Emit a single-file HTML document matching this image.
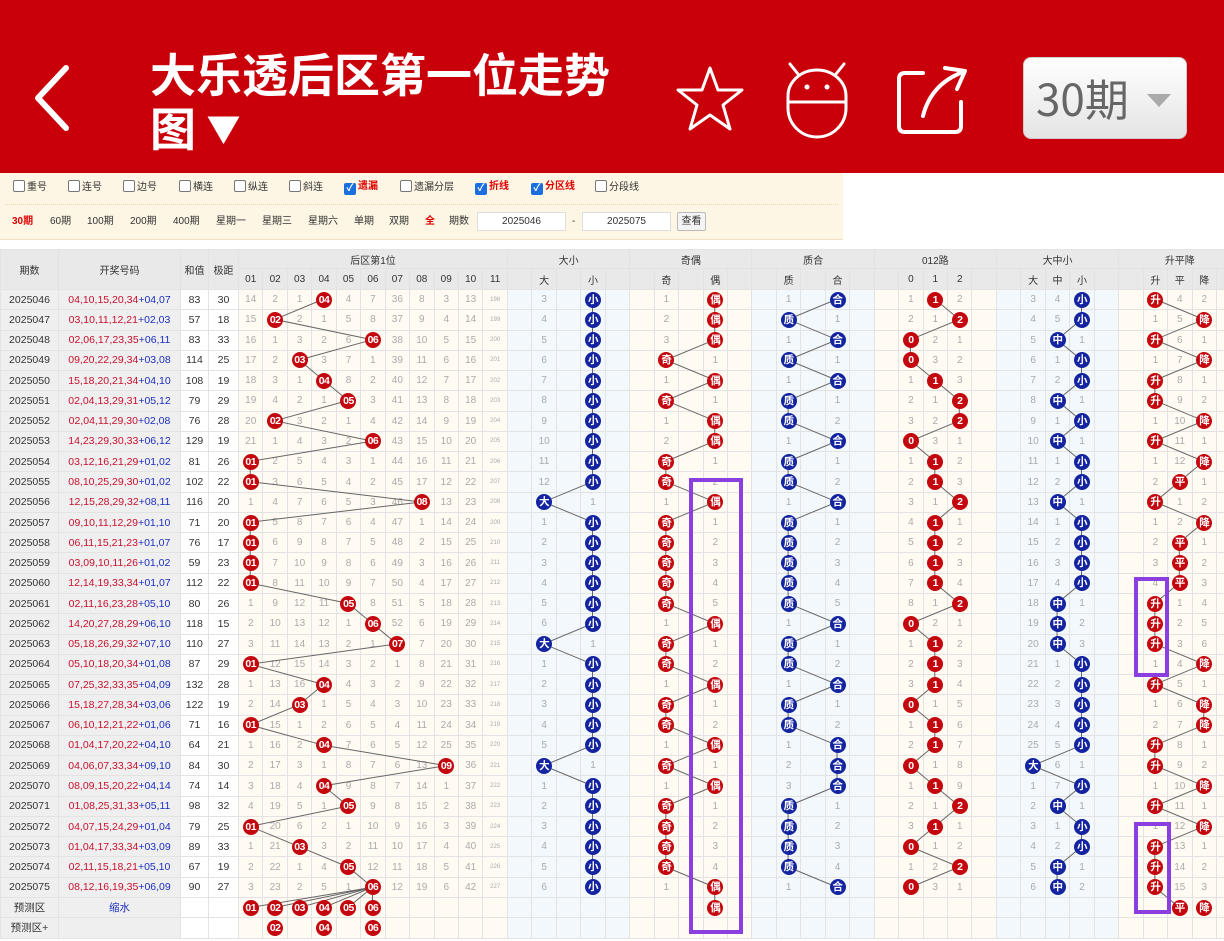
<!DOCTYPE html>
<html><head><meta charset="utf-8">
<style>
*{margin:0;padding:0;box-sizing:border-box}
body{width:1224px;height:941px;overflow:hidden;background:#fff;font-family:"Liberation Sans","Noto Sans CJK SC",sans-serif;position:relative}
.top{position:absolute;left:0;top:0;width:1224px;height:173px;background:#c9000a}
.title{position:absolute;left:150px;top:46px;color:#fff;font-size:46px;font-weight:bold;line-height:54px;font-family:"Noto Sans CJK SC",sans-serif}
.title small{font-size:34px;vertical-align:4px}
.dd{position:absolute;left:1023px;top:57px;width:164px;height:82px;border-radius:8px;background:linear-gradient(#fff,#e4e4e4);border:1px solid #ccc}
.dd span{position:absolute;left:12px;top:14px;font-size:44px;color:#666;font-family:"Noto Sans CJK SC",sans-serif;line-height:50px}
.dd i{position:absolute;left:123px;top:36px;border-left:12px solid transparent;border-right:12px solid transparent;border-top:13px solid #aaa}
.flt{position:absolute;left:0;top:173px;width:843px;height:67px;background:#fdf6e4;border-bottom:1px solid #f0e2c0;font-size:10px;color:#333}
.flt .l{position:absolute;top:7px;line-height:14px;white-space:nowrap}
.cb{display:inline-block;width:12px;height:12px;border:1px solid #777;border-radius:2px;background:#fff;vertical-align:-2px;margin-right:2px}
.cb.on{background:#1a6fe0;border-color:#1a6fe0;color:#fff;font-size:10px;line-height:10px;text-align:center;font-weight:bold}
.red{color:#d00;font-weight:bold}
.sep{position:absolute;left:5px;right:5px;top:31px;border-top:1px dotted #e8d8b0}
.flt .m{position:absolute;top:42px;line-height:14px;white-space:nowrap}
.inp{position:absolute;top:39px;height:19px;width:89px;background:#fff;border:1px solid #ddd;text-align:center;line-height:17px}
.btn{position:absolute;left:677px;top:39px;width:29px;height:19px;border:1px solid #bbb;background:#f4f4f4;text-align:center;line-height:17px;border-radius:2px}
table{position:absolute;left:0;top:249px;border-collapse:collapse;table-layout:fixed;width:1240.45px;font-size:10px;color:#aaa}
td,th{padding:0;text-align:center;border:1px solid #e3e3e3;white-space:nowrap;overflow:visible;font-weight:normal}
thead th{background:#e9e9e9;color:#333;font-size:10px}
thead tr.h1{height:19px}thead tr.h2{height:21px}
tbody tr{height:20.28px}
tbody td:nth-child(1){background:#efefef;color:#333;font-size:10.5px}
tbody td:nth-child(2){background:#efefef;color:#c8102e;font-size:10.5px}
tbody td:nth-child(3),tbody td:nth-child(4){background:#fff;color:#333;font-size:10.5px}
em{font-style:normal;color:#1c2fc0}
.cr{background:#fffbf2}.cbl{background:#f3f8fd}
.sl{border-left:1px solid #c59a9a}
td.s{font-size:6px}
b,u{display:inline-block;position:relative;z-index:2;width:16px;height:16px;border-radius:50%;color:#fff;font-size:10.5px;line-height:16px;font-weight:bold;text-decoration:none;vertical-align:middle;letter-spacing:-0.5px}
b{background:#c4070f}u{background:#1424a0}
svg.ln{position:absolute;left:238px;top:289px;width:1002.45px;height:628.7px;z-index:1}
.pb{position:absolute;border:4px solid #8b3fe0;z-index:3}
</style></head><body>
<div class="top">
<svg style="position:absolute;left:30px;top:62px" width="44" height="72" viewBox="0 0 44 72"><path d="M36 6 L8 36 L36 66" fill="none" stroke="#fff" stroke-width="6" stroke-linecap="round" stroke-linejoin="round"/></svg>
<div class="title">大乐透后区第一位走势<br>图 <small>▼</small></div>
<svg style="position:absolute;left:674px;top:64px" width="72" height="70" viewBox="0 0 72 70"><path d="M36 4 L44 26 L68 26 L49 41 L56 65 L36 51 L16 65 L23 41 L4 26 L28 26 Z" fill="none" stroke="#fff" stroke-width="3" stroke-linejoin="round"/></svg>
<svg style="position:absolute;left:780px;top:58px" width="74" height="82" viewBox="0 0 74 82"><path d="M10 6 L18 16 M64 6 L56 16" stroke="#fff" stroke-width="3" stroke-linecap="round"/><path d="M8 44 L8 38 A29 26 0 0 1 66 38 L66 50 A29 29 0 0 1 8 50 Z M8 44 L66 44" fill="none" stroke="#fff" stroke-width="3"/><circle cx="27" cy="29" r="2.5" fill="#fff"/><circle cx="47" cy="29" r="2.5" fill="#fff"/></svg>
<svg style="position:absolute;left:893px;top:62px" width="76" height="76" viewBox="0 0 76 76"><path d="M30 11 L12 11 Q6 11 6 17 L6 64 Q6 70 12 70 L62 70 Q68 70 68 64 L68 40" fill="none" stroke="#fff" stroke-width="4" stroke-linecap="round"/><path d="M30 54 Q38 22 70 10 M52 6 L72 9 L64 27" fill="none" stroke="#fff" stroke-width="4" stroke-linecap="round" stroke-linejoin="round"/></svg>
<div class="dd"><span>30期</span><i></i></div>
</div>
<div class="flt">
<div class="l" style="left:13px"><span class="cb"></span>重号</div>
<div class="l" style="left:68px"><span class="cb"></span>连号</div>
<div class="l" style="left:123px"><span class="cb"></span>边号</div>
<div class="l" style="left:179px"><span class="cb"></span>横连</div>
<div class="l" style="left:234px"><span class="cb"></span>纵连</div>
<div class="l" style="left:289px"><span class="cb"></span>斜连</div>
<div class="l red" style="left:344px"><span class="cb on">✓</span>遗漏</div>
<div class="l" style="left:400px"><span class="cb"></span>遗漏分层</div>
<div class="l red" style="left:475px"><span class="cb on">✓</span>折线</div>
<div class="l red" style="left:531px"><span class="cb on">✓</span>分区线</div>
<div class="l" style="left:595px"><span class="cb"></span>分段线</div>
<div class="sep"></div>
<div class="m red" style="left:12px">30期</div><div class="m" style="left:50px">60期</div><div class="m" style="left:87px">100期</div><div class="m" style="left:130px">200期</div><div class="m" style="left:173px">400期</div><div class="m" style="left:216px">星期一</div><div class="m" style="left:262px">星期三</div><div class="m" style="left:308px">星期六</div><div class="m" style="left:354px">单期</div><div class="m" style="left:389px">双期</div><div class="m red" style="left:425px">全</div><div class="m" style="left:449px">期数</div>
<div class="inp" style="left:477px">2025046</div><div class="m" style="left:572px">-</div><div class="inp" style="left:582px">2025075</div><div class="btn">查看</div>
</div>
<svg class="ln" viewBox="0 0 41 31" preserveAspectRatio="none"><g fill="none" stroke="#666" stroke-width="1" vector-effect="non-scaling-stroke">
<polyline vector-effect="non-scaling-stroke" points="3.5,.5 1.5,1.5 5.5,2.5 2.5,3.5 3.5,4.5 4.5,5.5 1.5,6.5 5.5,7.5 .5,8.5 .5,9.5 7.5,10.5 .5,11.5 .5,12.5 .5,13.5 .5,14.5 4.5,15.5 5.5,16.5 6.5,17.5 .5,18.5 3.5,19.5 2.5,20.5 .5,21.5 3.5,22.5 8.5,23.5 3.5,24.5 4.5,25.5 .5,26.5 2.5,27.5 4.5,28.5 5.5,29.5"/>
<path vector-effect="non-scaling-stroke" d="M5.5 29.5 L.5 30.5 M5.5 29.5 L1.5 30.5 M5.5 29.5 L2.5 30.5 M5.5 29.5 L3.5 30.5 M5.5 29.5 L4.5 30.5 M5.5 29.5 L5.5 30.5"/>
<polyline vector-effect="non-scaling-stroke" points="14.5,.5 14.5,1.5 14.5,2.5 14.5,3.5 14.5,4.5 14.5,5.5 14.5,6.5 14.5,7.5 14.5,8.5 14.5,9.5 12.5,10.5 14.5,11.5 14.5,12.5 14.5,13.5 14.5,14.5 14.5,15.5 14.5,16.5 12.5,17.5 14.5,18.5 14.5,19.5 14.5,20.5 14.5,21.5 14.5,22.5 12.5,23.5 14.5,24.5 14.5,25.5 14.5,26.5 14.5,27.5 14.5,28.5 14.5,29.5"/>
<polyline vector-effect="non-scaling-stroke" points="19.5,.5 19.5,1.5 19.5,2.5 17.5,3.5 19.5,4.5 17.5,5.5 19.5,6.5 19.5,7.5 17.5,8.5 17.5,9.5 19.5,10.5 17.5,11.5 17.5,12.5 17.5,13.5 17.5,14.5 17.5,15.5 19.5,16.5 17.5,17.5 17.5,18.5 19.5,19.5 17.5,20.5 17.5,21.5 19.5,22.5 17.5,23.5 19.5,24.5 17.5,25.5 17.5,26.5 17.5,27.5 17.5,28.5 19.5,29.5 19.5,30.5"/>
<polyline vector-effect="non-scaling-stroke" points="24.5,.5 22.5,1.5 24.5,2.5 22.5,3.5 24.5,4.5 22.5,5.5 22.5,6.5 24.5,7.5 22.5,8.5 22.5,9.5 24.5,10.5 22.5,11.5 22.5,12.5 22.5,13.5 22.5,14.5 22.5,15.5 24.5,16.5 22.5,17.5 22.5,18.5 24.5,19.5 22.5,20.5 22.5,21.5 24.5,22.5 24.5,23.5 24.5,24.5 22.5,25.5 22.5,26.5 22.5,27.5 22.5,28.5 24.5,29.5"/>
<polyline vector-effect="non-scaling-stroke" points="28.5,.5 29.5,1.5 27.5,2.5 27.5,3.5 28.5,4.5 29.5,5.5 29.5,6.5 27.5,7.5 28.5,8.5 28.5,9.5 29.5,10.5 28.5,11.5 28.5,12.5 28.5,13.5 28.5,14.5 29.5,15.5 27.5,16.5 28.5,17.5 28.5,18.5 28.5,19.5 27.5,20.5 28.5,21.5 28.5,22.5 27.5,23.5 28.5,24.5 29.5,25.5 28.5,26.5 27.5,27.5 29.5,28.5 27.5,29.5"/>
<polyline vector-effect="non-scaling-stroke" points="34.5,.5 34.5,1.5 33.5,2.5 34.5,3.5 34.5,4.5 33.5,5.5 34.5,6.5 33.5,7.5 34.5,8.5 34.5,9.5 33.5,10.5 34.5,11.5 34.5,12.5 34.5,13.5 34.5,14.5 33.5,15.5 33.5,16.5 33.5,17.5 34.5,18.5 34.5,19.5 34.5,20.5 34.5,21.5 34.5,22.5 32.5,23.5 34.5,24.5 33.5,25.5 34.5,26.5 34.5,27.5 33.5,28.5 33.5,29.5"/>
<polyline vector-effect="non-scaling-stroke" points="37.5,.5 39.5,1.5 37.5,2.5 39.5,3.5 37.5,4.5 37.5,5.5 39.5,6.5 37.5,7.5 39.5,8.5 38.5,9.5 37.5,10.5 39.5,11.5 38.5,12.5 38.5,13.5 38.5,14.5 37.5,15.5 37.5,16.5 37.5,17.5 39.5,18.5 37.5,19.5 39.5,20.5 39.5,21.5 37.5,22.5 37.5,23.5 39.5,24.5 37.5,25.5 39.5,26.5 37.5,27.5 37.5,28.5 37.5,29.5 38.5,30.5"/>
</g></svg>
<table>
<colgroup><col style="width:58px"><col style="width:122px"><col style="width:28px"><col style="width:30px">
<col class="cr sl" span="11" style="width:24.45px">
<col class="cbl sl" style="width:24.45px"><col class="cbl" span="4" style="width:24.45px">
<col class="cr sl" style="width:24.45px"><col class="cr" span="4" style="width:24.45px">
<col class="cbl sl" style="width:24.45px"><col class="cbl" span="4" style="width:24.45px">
<col class="cr sl" style="width:24.45px"><col class="cr" span="4" style="width:24.45px">
<col class="cbl sl" style="width:24.45px"><col class="cbl" span="4" style="width:24.45px">
<col class="cr sl" style="width:24.45px"><col class="cr" span="4" style="width:24.45px">
</colgroup>
<thead>
<tr class="h1"><th rowspan="2">期数</th><th rowspan="2">开奖号码</th><th rowspan="2">和值</th><th rowspan="2">极距</th><th colspan="11">后区第1位</th><th colspan="5">大小</th><th colspan="5">奇偶</th><th colspan="5">质合</th><th colspan="5">012路</th><th colspan="5">大中小</th><th colspan="5">升平降</th></tr>
<tr class="h2"><th>01</th><th>02</th><th>03</th><th>04</th><th>05</th><th>06</th><th>07</th><th>08</th><th>09</th><th>10</th><th>11</th><th></th><th>大</th><th></th><th>小</th><th></th><th></th><th>奇</th><th></th><th>偶</th><th></th><th></th><th>质</th><th></th><th>合</th><th></th><th></th><th>0</th><th>1</th><th>2</th><th></th><th></th><th>大</th><th>中</th><th>小</th><th></th><th></th><th>升</th><th>平</th><th>降</th><th></th></tr>
</thead>
<tbody>
<tr><td>2025046<td>04,10,15,20,34<em>+04,07</em><td>83<td>30<td>14<td>2<td>1<td><b>04</b><td>4<td>7<td>36<td>8<td>3<td>13<td class=s>198<td><td>3<td><td><u>小</u><td><td><td>1<td><td><b>偶</b><td><td><td>1<td><td><u>合</u><td><td><td>1<td><b>1</b><td>2<td><td><td>3<td>4<td><u>小</u><td><td><td><b>升</b><td>4<td>2<td></tr>
<tr><td>2025047<td>03,10,11,12,21<em>+02,03</em><td>57<td>18<td>15<td><b>02</b><td>2<td>1<td>5<td>8<td>37<td>9<td>4<td>14<td class=s>199<td><td>4<td><td><u>小</u><td><td><td>2<td><td><b>偶</b><td><td><td><u>质</u><td><td>1<td><td><td>2<td>1<td><b>2</b><td><td><td>4<td>5<td><u>小</u><td><td><td>1<td>5<td><b>降</b><td></tr>
<tr><td>2025048<td>02,06,17,23,35<em>+06,11</em><td>83<td>33<td>16<td>1<td>3<td>2<td>6<td><b>06</b><td>38<td>10<td>5<td>15<td class=s>200<td><td>5<td><td><u>小</u><td><td><td>3<td><td><b>偶</b><td><td><td>1<td><td><u>合</u><td><td><td><b>0</b><td>2<td>1<td><td><td>5<td><u>中</u><td>1<td><td><td><b>升</b><td>6<td>1<td></tr>
<tr><td>2025049<td>09,20,22,29,34<em>+03,08</em><td>114<td>25<td>17<td>2<td><b>03</b><td>3<td>7<td>1<td>39<td>11<td>6<td>16<td class=s>201<td><td>6<td><td><u>小</u><td><td><td><b>奇</b><td><td>1<td><td><td><u>质</u><td><td>1<td><td><td><b>0</b><td>3<td>2<td><td><td>6<td>1<td><u>小</u><td><td><td>1<td>7<td><b>降</b><td></tr>
<tr><td>2025050<td>15,18,20,21,34<em>+04,10</em><td>108<td>19<td>18<td>3<td>1<td><b>04</b><td>8<td>2<td>40<td>12<td>7<td>17<td class=s>202<td><td>7<td><td><u>小</u><td><td><td>1<td><td><b>偶</b><td><td><td>1<td><td><u>合</u><td><td><td>1<td><b>1</b><td>3<td><td><td>7<td>2<td><u>小</u><td><td><td><b>升</b><td>8<td>1<td></tr>
<tr><td>2025051<td>02,04,13,29,31<em>+05,12</em><td>79<td>29<td>19<td>4<td>2<td>1<td><b>05</b><td>3<td>41<td>13<td>8<td>18<td class=s>203<td><td>8<td><td><u>小</u><td><td><td><b>奇</b><td><td>1<td><td><td><u>质</u><td><td>1<td><td><td>2<td>1<td><b>2</b><td><td><td>8<td><u>中</u><td>1<td><td><td><b>升</b><td>9<td>2<td></tr>
<tr><td>2025052<td>02,04,11,29,30<em>+02,08</em><td>76<td>28<td>20<td><b>02</b><td>3<td>2<td>1<td>4<td>42<td>14<td>9<td>19<td class=s>204<td><td>9<td><td><u>小</u><td><td><td>1<td><td><b>偶</b><td><td><td><u>质</u><td><td>2<td><td><td>3<td>2<td><b>2</b><td><td><td>9<td>1<td><u>小</u><td><td><td>1<td>10<td><b>降</b><td></tr>
<tr><td>2025053<td>14,23,29,30,33<em>+06,12</em><td>129<td>19<td>21<td>1<td>4<td>3<td>2<td><b>06</b><td>43<td>15<td>10<td>20<td class=s>205<td><td>10<td><td><u>小</u><td><td><td>2<td><td><b>偶</b><td><td><td>1<td><td><u>合</u><td><td><td><b>0</b><td>3<td>1<td><td><td>10<td><u>中</u><td>1<td><td><td><b>升</b><td>11<td>1<td></tr>
<tr><td>2025054<td>03,12,16,21,29<em>+01,02</em><td>81<td>26<td><b>01</b><td>2<td>5<td>4<td>3<td>1<td>44<td>16<td>11<td>21<td class=s>206<td><td>11<td><td><u>小</u><td><td><td><b>奇</b><td><td>1<td><td><td><u>质</u><td><td>1<td><td><td>1<td><b>1</b><td>2<td><td><td>11<td>1<td><u>小</u><td><td><td>1<td>12<td><b>降</b><td></tr>
<tr><td>2025055<td>08,10,25,29,30<em>+01,02</em><td>102<td>22<td><b>01</b><td>3<td>6<td>5<td>4<td>2<td>45<td>17<td>12<td>22<td class=s>207<td><td>12<td><td><u>小</u><td><td><td><b>奇</b><td><td>2<td><td><td><u>质</u><td><td>2<td><td><td>2<td><b>1</b><td>3<td><td><td>12<td>2<td><u>小</u><td><td><td>2<td><b>平</b><td>1<td></tr>
<tr><td>2025056<td>12,15,28,29,32<em>+08,11</em><td>116<td>20<td>1<td>4<td>7<td>6<td>5<td>3<td>46<td><b>08</b><td>13<td>23<td class=s>208<td><td><u>大</u><td><td>1<td><td><td>1<td><td><b>偶</b><td><td><td>1<td><td><u>合</u><td><td><td>3<td>1<td><b>2</b><td><td><td>13<td><u>中</u><td>1<td><td><td><b>升</b><td>1<td>2<td></tr>
<tr><td>2025057<td>09,10,11,12,29<em>+01,10</em><td>71<td>20<td><b>01</b><td>5<td>8<td>7<td>6<td>4<td>47<td>1<td>14<td>24<td class=s>209<td><td>1<td><td><u>小</u><td><td><td><b>奇</b><td><td>1<td><td><td><u>质</u><td><td>1<td><td><td>4<td><b>1</b><td>1<td><td><td>14<td>1<td><u>小</u><td><td><td>1<td>2<td><b>降</b><td></tr>
<tr><td>2025058<td>06,11,15,21,23<em>+01,07</em><td>76<td>17<td><b>01</b><td>6<td>9<td>8<td>7<td>5<td>48<td>2<td>15<td>25<td class=s>210<td><td>2<td><td><u>小</u><td><td><td><b>奇</b><td><td>2<td><td><td><u>质</u><td><td>2<td><td><td>5<td><b>1</b><td>2<td><td><td>15<td>2<td><u>小</u><td><td><td>2<td><b>平</b><td>1<td></tr>
<tr><td>2025059<td>03,09,10,11,26<em>+01,02</em><td>59<td>23<td><b>01</b><td>7<td>10<td>9<td>8<td>6<td>49<td>3<td>16<td>26<td class=s>211<td><td>3<td><td><u>小</u><td><td><td><b>奇</b><td><td>3<td><td><td><u>质</u><td><td>3<td><td><td>6<td><b>1</b><td>3<td><td><td>16<td>3<td><u>小</u><td><td><td>3<td><b>平</b><td>2<td></tr>
<tr><td>2025060<td>12,14,19,33,34<em>+01,07</em><td>112<td>22<td><b>01</b><td>8<td>11<td>10<td>9<td>7<td>50<td>4<td>17<td>27<td class=s>212<td><td>4<td><td><u>小</u><td><td><td><b>奇</b><td><td>4<td><td><td><u>质</u><td><td>4<td><td><td>7<td><b>1</b><td>4<td><td><td>17<td>4<td><u>小</u><td><td><td>4<td><b>平</b><td>3<td></tr>
<tr><td>2025061<td>02,11,16,23,28<em>+05,10</em><td>80<td>26<td>1<td>9<td>12<td>11<td><b>05</b><td>8<td>51<td>5<td>18<td>28<td class=s>213<td><td>5<td><td><u>小</u><td><td><td><b>奇</b><td><td>5<td><td><td><u>质</u><td><td>5<td><td><td>8<td>1<td><b>2</b><td><td><td>18<td><u>中</u><td>1<td><td><td><b>升</b><td>1<td>4<td></tr>
<tr><td>2025062<td>14,20,27,28,29<em>+06,10</em><td>118<td>15<td>2<td>10<td>13<td>12<td>1<td><b>06</b><td>52<td>6<td>19<td>29<td class=s>214<td><td>6<td><td><u>小</u><td><td><td>1<td><td><b>偶</b><td><td><td>1<td><td><u>合</u><td><td><td><b>0</b><td>2<td>1<td><td><td>19<td><u>中</u><td>2<td><td><td><b>升</b><td>2<td>5<td></tr>
<tr><td>2025063<td>05,18,26,29,32<em>+07,10</em><td>110<td>27<td>3<td>11<td>14<td>13<td>2<td>1<td><b>07</b><td>7<td>20<td>30<td class=s>215<td><td><u>大</u><td><td>1<td><td><td><b>奇</b><td><td>1<td><td><td><u>质</u><td><td>1<td><td><td>1<td><b>1</b><td>2<td><td><td>20<td><u>中</u><td>3<td><td><td><b>升</b><td>3<td>6<td></tr>
<tr><td>2025064<td>05,10,18,20,34<em>+01,08</em><td>87<td>29<td><b>01</b><td>12<td>15<td>14<td>3<td>2<td>1<td>8<td>21<td>31<td class=s>216<td><td>1<td><td><u>小</u><td><td><td><b>奇</b><td><td>2<td><td><td><u>质</u><td><td>2<td><td><td>2<td><b>1</b><td>3<td><td><td>21<td>1<td><u>小</u><td><td><td>1<td>4<td><b>降</b><td></tr>
<tr><td>2025065<td>07,25,32,33,35<em>+04,09</em><td>132<td>28<td>1<td>13<td>16<td><b>04</b><td>4<td>3<td>2<td>9<td>22<td>32<td class=s>217<td><td>2<td><td><u>小</u><td><td><td>1<td><td><b>偶</b><td><td><td>1<td><td><u>合</u><td><td><td>3<td><b>1</b><td>4<td><td><td>22<td>2<td><u>小</u><td><td><td><b>升</b><td>5<td>1<td></tr>
<tr><td>2025066<td>15,18,27,28,34<em>+03,06</em><td>122<td>19<td>2<td>14<td><b>03</b><td>1<td>5<td>4<td>3<td>10<td>23<td>33<td class=s>218<td><td>3<td><td><u>小</u><td><td><td><b>奇</b><td><td>1<td><td><td><u>质</u><td><td>1<td><td><td><b>0</b><td>1<td>5<td><td><td>23<td>3<td><u>小</u><td><td><td>1<td>6<td><b>降</b><td></tr>
<tr><td>2025067<td>06,10,12,21,22<em>+01,06</em><td>71<td>16<td><b>01</b><td>15<td>1<td>2<td>6<td>5<td>4<td>11<td>24<td>34<td class=s>219<td><td>4<td><td><u>小</u><td><td><td><b>奇</b><td><td>2<td><td><td><u>质</u><td><td>2<td><td><td>1<td><b>1</b><td>6<td><td><td>24<td>4<td><u>小</u><td><td><td>2<td>7<td><b>降</b><td></tr>
<tr><td>2025068<td>01,04,17,20,22<em>+04,10</em><td>64<td>21<td>1<td>16<td>2<td><b>04</b><td>7<td>6<td>5<td>12<td>25<td>35<td class=s>220<td><td>5<td><td><u>小</u><td><td><td>1<td><td><b>偶</b><td><td><td>1<td><td><u>合</u><td><td><td>2<td><b>1</b><td>7<td><td><td>25<td>5<td><u>小</u><td><td><td><b>升</b><td>8<td>1<td></tr>
<tr><td>2025069<td>04,06,07,33,34<em>+09,10</em><td>84<td>30<td>2<td>17<td>3<td>1<td>8<td>7<td>6<td>13<td><b>09</b><td>36<td class=s>221<td><td><u>大</u><td><td>1<td><td><td><b>奇</b><td><td>1<td><td><td>2<td><td><u>合</u><td><td><td><b>0</b><td>1<td>8<td><td><td><u>大</u><td>6<td>1<td><td><td><b>升</b><td>9<td>2<td></tr>
<tr><td>2025070<td>08,09,15,20,22<em>+04,14</em><td>74<td>14<td>3<td>18<td>4<td><b>04</b><td>9<td>8<td>7<td>14<td>1<td>37<td class=s>222<td><td>1<td><td><u>小</u><td><td><td>1<td><td><b>偶</b><td><td><td>3<td><td><u>合</u><td><td><td>1<td><b>1</b><td>9<td><td><td>1<td>7<td><u>小</u><td><td><td>1<td>10<td><b>降</b><td></tr>
<tr><td>2025071<td>01,08,25,31,33<em>+05,11</em><td>98<td>32<td>4<td>19<td>5<td>1<td><b>05</b><td>9<td>8<td>15<td>2<td>38<td class=s>223<td><td>2<td><td><u>小</u><td><td><td><b>奇</b><td><td>1<td><td><td><u>质</u><td><td>1<td><td><td>2<td>1<td><b>2</b><td><td><td>2<td><u>中</u><td>1<td><td><td><b>升</b><td>11<td>1<td></tr>
<tr><td>2025072<td>04,07,15,24,29<em>+01,04</em><td>79<td>25<td><b>01</b><td>20<td>6<td>2<td>1<td>10<td>9<td>16<td>3<td>39<td class=s>224<td><td>3<td><td><u>小</u><td><td><td><b>奇</b><td><td>2<td><td><td><u>质</u><td><td>2<td><td><td>3<td><b>1</b><td>1<td><td><td>3<td>1<td><u>小</u><td><td><td>1<td>12<td><b>降</b><td></tr>
<tr><td>2025073<td>01,04,17,33,34<em>+03,09</em><td>89<td>33<td>1<td>21<td><b>03</b><td>3<td>2<td>11<td>10<td>17<td>4<td>40<td class=s>225<td><td>4<td><td><u>小</u><td><td><td><b>奇</b><td><td>3<td><td><td><u>质</u><td><td>3<td><td><td><b>0</b><td>1<td>2<td><td><td>4<td>2<td><u>小</u><td><td><td><b>升</b><td>13<td>1<td></tr>
<tr><td>2025074<td>02,11,15,18,21<em>+05,10</em><td>67<td>19<td>2<td>22<td>1<td>4<td><b>05</b><td>12<td>11<td>18<td>5<td>41<td class=s>226<td><td>5<td><td><u>小</u><td><td><td><b>奇</b><td><td>4<td><td><td><u>质</u><td><td>4<td><td><td>1<td>2<td><b>2</b><td><td><td>5<td><u>中</u><td>1<td><td><td><b>升</b><td>14<td>2<td></tr>
<tr><td>2025075<td>08,12,16,19,35<em>+06,09</em><td>90<td>27<td>3<td>23<td>2<td>5<td>1<td><b>06</b><td>12<td>19<td>6<td>42<td class=s>227<td><td>6<td><td><u>小</u><td><td><td>1<td><td><b>偶</b><td><td><td>1<td><td><u>合</u><td><td><td><b>0</b><td>3<td>1<td><td><td>6<td><u>中</u><td>2<td><td><td><b>升</b><td>15<td>3<td></tr>
<tr><td>预测区<td><em>缩水</em><td><td><td><b>01</b><td><b>02</b><td><b>03</b><td><b>04</b><td><b>05</b><td><b>06</b><td><td><td><td><td><td><td><td><td><td><td><td><td><td><b>偶</b><td><td><td><td><td><td><td><td><td><td><td><td><td><td><td><td><td><td><td><b>平</b><td><b>降</b><td></tr>
<tr><td>预测区+<td><td><td><td><td><b>02</b><td><td><b>04</b><td><td><b>06</b><td><td><td><td><td><td><td><td><td><td><td><td><td><td><td><td><td><td><td><td><td><td><td><td><td><td><td><td><td><td><td><td><td><td><td></tr>
</tbody></table>
<div class="pb" style="left:689px;top:478px;width:54px;height:456px"></div>
<div class="pb" style="left:1134px;top:577px;width:35px;height:100px"></div>
<div class="pb" style="left:1134px;top:822px;width:37px;height:92px"></div>
</body></html>
